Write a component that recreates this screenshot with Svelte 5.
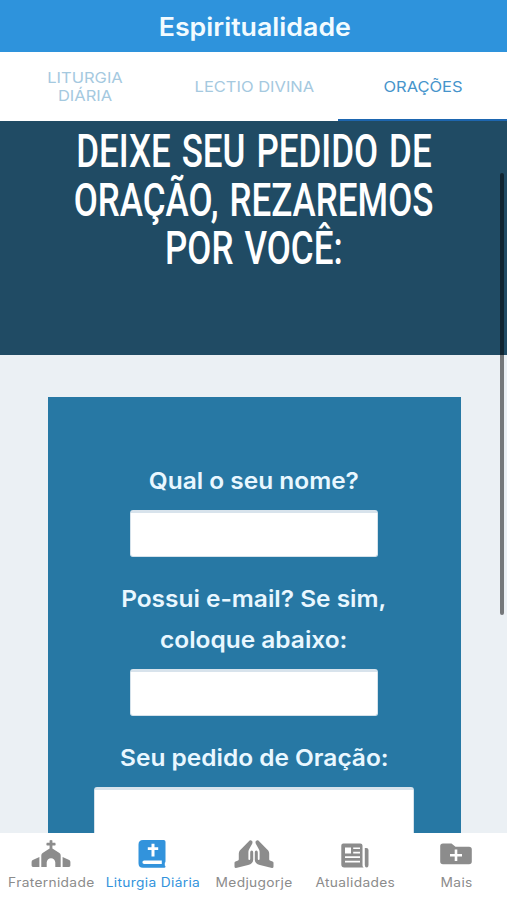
<script>
    let active = "oracoes";
    let section = "liturgia";

    let nome = "";
    let email = "";
    let pedido = "";

    const tabs = [
        { id: "liturgia", label: "Liturgia Diária" },
        { id: "lectio", label: "Lectio Divina" },
        { id: "oracoes", label: "Orações" },
    ];

    const titulo = ["Deixe seu pedido de", "oração, rezaremos", "por você:"];

    const menu = [
        { id: "fraternidade", label: "Fraternidade" },
        { id: "liturgia", label: "Liturgia Diária" },
        { id: "medjugorje", label: "Medjugorje" },
        { id: "atualidades", label: "Atualidades" },
        { id: "mais", label: "Mais" },
    ];

    const mao =
        "M18.4 1.6q1.9 1 .9 3L16 10.5q-.6 1-.6 2.500v7q0 1 .9 1t.9-1v-6.500q0-1.900 1.500-1.900t1.500 1.900v7.200q0 4-5.100 5.200L3 29q-1.500.1-1.500-1.500v-3.700q0-1 1-1.400l2.600-1q.7-.3.700-1.200v-5.700q0-1.500 1-3L15.900 2.200q1-1.400 2.500-.6z";
</script>

<div class="app">
    <header><span>Espiritualidade</span></header>

    <div class="tabs">
        {#each tabs as tab}
            <button
                class="tab tab-{tab.id}"
                class:active={active == tab.id}
                on:click={() => (active = tab.id)}><span>{tab.label}</span></button
            >
        {/each}
    </div>

    <main>
        <section class="hero">
            <h1>
                {#each titulo as linha}
                    <span>{linha}</span>
                {/each}
            </h1>
        </section>

        <form>
            <label for="nome">Qual o seu nome?</label>
            <input id="nome" type="text" bind:value={nome} />
            <label for="email">Possui e-mail? Se sim,<br />coloque abaixo:</label>
            <input id="email" type="text" bind:value={email} />
            <label for="pedido">Seu pedido de Oração:</label>
            <textarea id="pedido" bind:value={pedido}></textarea>
        </form>

        <div class="scrollbar"></div>
    </main>

    <nav>
        {#each menu as item}
            <button
                class="item"
                class:active={section == item.id}
                on:click={() => (section = item.id)}
            >
                <svg viewBox="0 0 42 30" width="42" height="30">
                    {#if item.id == "fraternidade"}
                        <path d="M19.6 1.5q1.4-1 2.8 0v2.3h2.8q1 1.4 0 2.8h-2.8v2.9l7 4.6q1.3.8 1.3 2.3V28h-5.4v-4.5a4.3 4.3 0 0 0-8.6 0V28h-5.4V16.4q0-1.5 1.3-2.3l7-4.6V6.600h-2.800q-1-1.400 0-2.800h2.800z" />
                        <path d="M9.400 18V28H3q-1.400 0-1.400-1.400v-3.600q0-1.400 1.200-2zM32.600 18V28H39q1.400 0 1.400-1.400v-3.600q0-1.400-1.200-2z" />
                    {:else if item.id == "liturgia"}
                        <path d="M12 1h20.700q1.800 0 1.800 1.800v19.400q0 1-.7 1.500v2.800q.7.300.7 1.100 0 1.200-1.300 1.200H12q-4.500 0-4.500-4.500V5.500Q7.500 1 12 1z" />
                        <path class="corte" d="M20.500 4.800h3v3.400h3.700v2.900h-3.700v6.400h-3v-6.400h-3.700V8.200h3.700zM13.200 21.500h17.600v3.600H13.200q-1.800 0-1.800-1.800t1.800-1.800z" />
                    {:else if item.id == "medjugorje"}
                        <path d={mao} />
                        <path d={mao} transform="translate(42 0) scale(-1 1)" />
                    {:else if item.id == "atualidades"}
                        <path fill-rule="evenodd" d="M9.300 4.500h17q2.200 0 2.200 2v20q0 1.600 1.200 2H10.300q-3 0-3-3v-19q0-2 2-2zM11 8.500v6h6v-6zM19.200 8.500v1.500H26V8.500zM19.200 12.800v1.700H26v-1.700zM11 17.300v1.700h15v-1.700zM11 21.800v1.700h15v-1.700z" />
                        <path d="M30.800 9h1.500q2.200 0 2.200 2v14.500q0 3-1.800 3T30.800 26z" />
                    {:else}
                        <path d="M8 4.500h8.500l4 3.300H34q2.800 0 2.800 2.700v12q0 2.800-2.800 2.800H8q-2.800 0-2.800-2.800V7.300Q5.200 4.500 8 4.500z" />
                        <path class="corte" d="M19.700 10.500h2.600v4.500H27v2.400h-4.700v4.500h-2.600v-4.500H15V15h4.700z" />
                    {/if}
                </svg>
                <span>{item.label}</span>
            </button>
        {/each}
    </nav>
</div>

<style>
    :global(body) {
        overflow: hidden;
    }
    .app {
        display: flex;
        flex-direction: column;
        width: 507px;
        height: 900px;
        background: #fff;
        font-family: Inter, "Liberation Sans", sans-serif;
    }
    button {
        padding: 0;
        border: 0;
        background: none;
        font-family: inherit;
    }
    header {
        height: 52px;
        padding-left: 2px;
        line-height: 54px;
        background: #2e93dc;
        color: #f2fbff;
        text-align: center;
        font-size: 25px;
        font-weight: 600;
    }
    /* the typeface is a little wider than Inter */
    header span {
        display: inline-block;
        transform: scaleX(1.07);
    }
    .tabs {
        display: flex;
        height: 69px;
    }
    .tab {
        flex: 1;
        padding: 2px 0 0 1px;
        border-bottom: 2px solid transparent;
        color: #a5c9df;
        font-size: 15px;
        line-height: 18px;
        text-transform: uppercase;
    }
    .tab span {
        display: inline-block;
        transform: scaleX(1.1);
    }
    .tab-liturgia span {
        width: 90px;
    }
    .tab.active {
        border-bottom-color: #1d66b0;
        color: #4694cb;
    }
    main {
        position: relative;
        flex: 1;
        min-height: 0;
        overflow: hidden;
        background: #ebf0f4;
    }
    .hero {
        height: 234px;
        background: #204b64;
        color: #fff;
        overflow: hidden;
    }
    h1 {
        display: flex;
        flex-direction: column;
        align-items: center;
        margin: 6px 0 0;
        font-family: Roboto, "Liberation Sans", sans-serif;
        font-size: 46px;
        font-weight: 500;
        line-height: 48.5px;
        text-transform: uppercase;
        white-space: nowrap;
        word-spacing: 3px;
    }
    /* condensed capitals */
    h1 span {
        transform: scaleX(0.76);
    }
    form {
        display: flex;
        flex-direction: column;
        align-items: center;
        box-sizing: border-box;
        width: 413px;
        height: 600px;
        margin: 42px 0 0 47.5px;
        padding-top: 64px;
        background: #2778a4;
    }
    label {
        transform: scaleX(1.063);
        color: #e9f7ff;
        font-size: 23px;
        font-weight: 600;
        line-height: 40.5px;
        text-align: center;
    }
    input,
    textarea {
        box-sizing: border-box;
        width: 248px;
        height: 47px;
        margin: 8.5px 0 22px;
        padding: 4px 10px;
        border: 1px solid #d5e2eb;
        border-top: 3px solid #d8e3ec;
        border-radius: 3px;
        background: #fff;
        outline: none;
        font: inherit;
        font-size: 20px;
    }
    textarea {
        width: 320px;
        height: 160px;
        resize: none;
    }
    .scrollbar {
        position: absolute;
        top: 52px;
        right: 3px;
        width: 4px;
        height: 442px;
        border-radius: 2px;
        background: rgba(0, 0, 0, 0.5);
    }
    nav {
        display: flex;
        height: 67px;
        background: #fff;
    }
    .item {
        display: flex;
        flex: 1 1 0;
        flex-direction: column;
        align-items: center;
        padding-top: 6px;
        color: #8c8c8c;
        font-size: 12.5px;
        line-height: 16px;
        white-space: nowrap;
    }
    .item span {
        padding-left: 1px;
        transform: scaleX(1.1);
        letter-spacing: 0.3px;
    }
    .item svg {
        margin-bottom: 6px;
        fill: currentColor;
    }
    .item .corte {
        fill: #fff;
    }
    .item.active {
        color: #3293dc;
    }
</style>
